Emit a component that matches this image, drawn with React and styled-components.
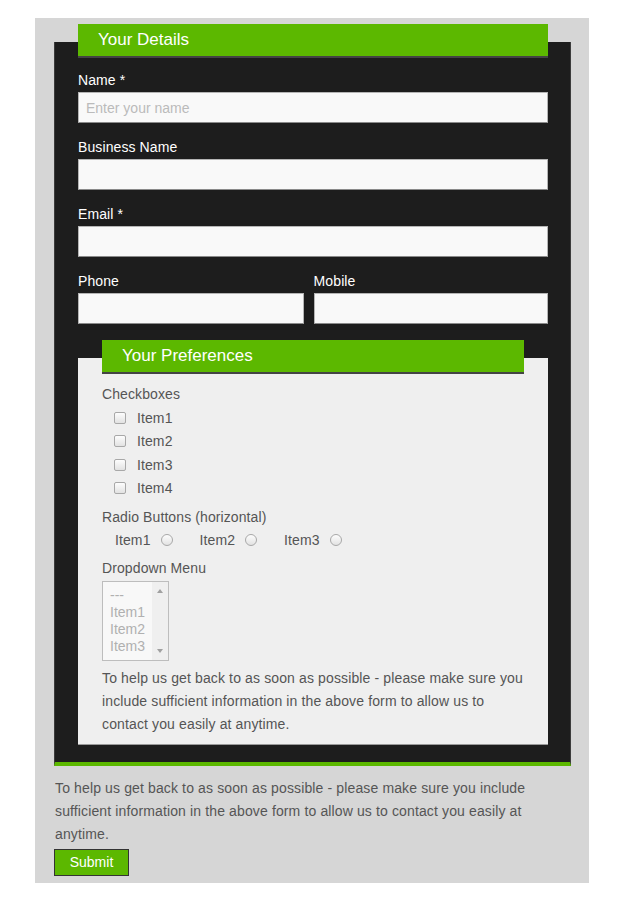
import React from 'react'
import styled, { createGlobalStyle } from 'styled-components'

const GlobalStyle = createGlobalStyle`
  body {
    margin: 0;
    background: #fff;
    font-family: "Liberation Sans", Arial, sans-serif;
  }
`

const green = '#5cb800'

const Page = styled.div`
  padding: 18px 0 20px 35px;
`

const Panel = styled.form`
  width: 554px;
  box-sizing: border-box;
  background: #d6d6d6;
  padding: 6px 18px 7px 19px;
`

const DarkSection = styled.div`
  display: flow-root;
  margin-top: 18px;
  background: #1d1d1d;
  border: 1px solid #3c3c3c;
  border-top: none;
  border-bottom: 4px solid ${green};
  padding: 0 22px 17px 23px;
`

const LightSection = styled.div`
  display: flow-root;
  margin-top: 34px;
  background: #efefef;
  border-bottom: 1px solid #9a9a9a;
  padding: 0 24px 8px;
`

const Header = styled.div`
  margin-top: -18px;
  height: 32px;
  line-height: 32px;
  padding-left: 20px;
  background: ${green};
  border-bottom: 2px solid #444;
  color: #fff;
  font-size: 17px;
`

const Field = styled.div`
  display: flex;
  flex-direction: column;
  gap: 3px;
  margin-top: ${p => p.$first ? '14px' : '16px'};
`

const Label = styled.label`
  color: #fff;
  font-size: 14px;
  line-height: 17px;
  letter-spacing: 0.1px;
`

const Input = styled.input`
  box-sizing: border-box;
  width: 100%;
  height: 31px;
  margin: 0;
  padding: 0 7px;
  background: #f9f9f9;
  border: 1px solid #b5b5b5;
  border-bottom-color: #8a8a8a;
  font-family: inherit;
  font-size: 14px;
  color: #333;
  outline: none;

  &::placeholder {
    color: #bbb;
  }
`

const TwoCols = styled.div`
  display: grid;
  grid-template-columns: 48% 1fr;
  column-gap: 10px;
`

const GroupTitle = styled.div`
  margin-top: ${p => p.$top || '9px'};
  color: #555;
  font-size: 14px;
  line-height: 17px;
  letter-spacing: 0.1px;
`

const CheckList = styled.div`
  display: flex;
  flex-direction: column;
  margin-top: 3px;
`

const CheckRow = styled.label`
  display: flex;
  align-items: center;
  height: 23.5px;
  padding-left: 12px;
  gap: 11px;
  color: #555;
  font-size: 14px;
  letter-spacing: 0.1px;
`

const Box = styled.input`
  appearance: none;
  margin: 0;
  width: 12px;
  height: 12px;
  border: 1px solid #a8a8a8;
  border-radius: ${p => p.type === 'radio' ? '50%' : '2px'};
  background: linear-gradient(#fdfdfd, #e2e2e2);
  box-sizing: border-box;
`

const RadioRow = styled.div`
  display: flex;
  height: 23px;
  margin-top: 2px;
  padding-left: 13px;
  gap: 27px;
`

const RadioItem = styled.label`
  display: flex;
  align-items: center;
  gap: 10px;
  color: #555;
  font-size: 14px;
  letter-spacing: 0.1px;
`

const ListBox = styled.div`
  display: flex;
  width: 67px;
  height: 80px;
  margin-top: 3.5px;
  box-sizing: border-box;
  border: 1px solid #bdbdbd;
  background: #f8f8f8;
`

const Options = styled.div`
  flex: 1;
  padding: 5px 0 0 7px;
`

const Option = styled.div`
  color: #b0b0b0;
  font-size: 14px;
  line-height: 17px;
`

const ScrollTrack = styled.div`
  width: 16px;
  background: #efefef;
  display: flex;
  flex-direction: column;
  justify-content: space-between;
  align-items: center;
  padding: 7px 0;
  box-sizing: border-box;
`

const Arrow = styled.span`
  width: 0;
  height: 0;
  border-left: 3px solid transparent;
  border-right: 3px solid transparent;
  ${p => p.$down
    ? 'border-top: 4px solid #a0a0a0;'
    : 'border-bottom: 4px solid #a0a0a0;'}
`

const Note = styled.p`
  margin: ${p => p.$outside ? '10.5px 0 0 1px' : '6.5px 0 0'};
  color: #555;
  font-size: 14px;
  line-height: 23px;
  letter-spacing: 0.13px;
`

const Submit = styled.button`
  display: block;
  width: 75px;
  height: 27px;
  margin-top: 3px;
  padding: 0;
  background: ${green};
  border: 1px solid #333;
  color: #fff;
  font-family: inherit;
  font-size: 14px;
`

const noteText =
  'To help us get back to as soon as possible - please make sure you include sufficient information in the above form to allow us to contact you easily at anytime.'

export default function App () {
  return (
    <Page>
      <GlobalStyle />
      <Panel onSubmit={e => e.preventDefault()}>
        <DarkSection>
          <Header>Your Details</Header>
          <Field $first>
            <Label>Name *</Label>
            <Input placeholder='Enter your name' />
          </Field>
          <Field>
            <Label>Business Name</Label>
            <Input />
          </Field>
          <Field>
            <Label>Email *</Label>
            <Input />
          </Field>
          <TwoCols>
            <Field>
              <Label>Phone</Label>
              <Input />
            </Field>
            <Field>
              <Label>Mobile</Label>
              <Input />
            </Field>
          </TwoCols>

          <LightSection>
            <Header>Your Preferences</Header>
            <GroupTitle $top='12px'>Checkboxes</GroupTitle>
            <CheckList>
              {['Item1', 'Item2', 'Item3', 'Item4'].map(item => (
                <CheckRow key={item}>
                  <Box type='checkbox' />
                  {item}
                </CheckRow>
              ))}
            </CheckList>
            <GroupTitle>Radio Buttons (horizontal)</GroupTitle>
            <RadioRow>
              {['Item1', 'Item2', 'Item3'].map(item => (
                <RadioItem key={item}>
                  {item}
                  <Box type='radio' name='radio' />
                </RadioItem>
              ))}
            </RadioRow>
            <GroupTitle>Dropdown Menu</GroupTitle>
            <ListBox>
              <Options>
                <Option>---</Option>
                <Option>Item1</Option>
                <Option>Item2</Option>
                <Option>Item3</Option>
              </Options>
              <ScrollTrack>
                <Arrow />
                <Arrow $down />
              </ScrollTrack>
            </ListBox>
            <Note>{noteText}</Note>
          </LightSection>
        </DarkSection>
        <Note $outside>{noteText}</Note>
        <Submit type='submit'>Submit</Submit>
      </Panel>
    </Page>
  )
}
